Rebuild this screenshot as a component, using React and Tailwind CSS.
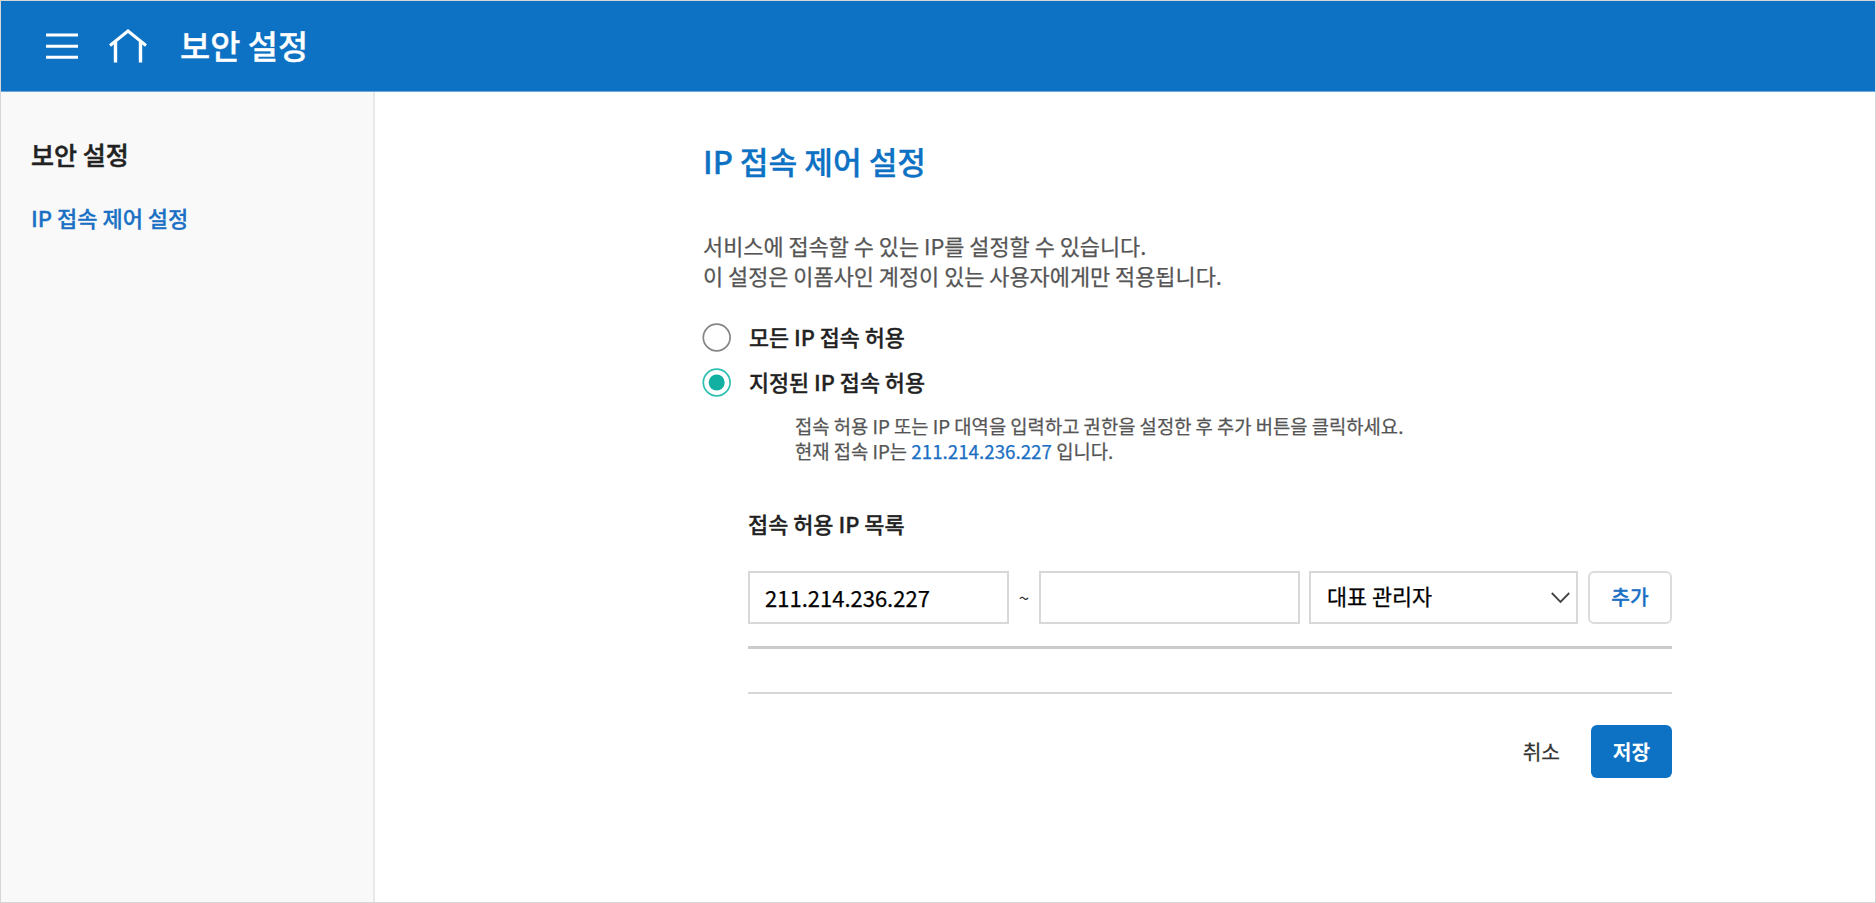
import { useState } from "react";

function MenuIcon() {
  return (
    <svg className="block h-7 w-8" viewBox="0 0 32 28" stroke="#fff" strokeWidth="3" fill="none">
      <path d="M0 3H32M0 14.2H32M0 25.2H32" />
    </svg>
  );
}

function HomeIcon() {
  return (
    <svg className="block h-[34px] w-[38px]" viewBox="0 0 38 34" stroke="#fff" strokeWidth="3" fill="none">
      <path d="M1 16.5L19 2L37 16.5" />
      <path d="M6.5 13V33.5M31.5 13V33.5" strokeWidth="3.4" />
    </svg>
  );
}

function Radio({ checked, label, onSelect }) {
  return (
    <button type="button" role="radio" aria-checked={checked} onClick={onSelect} className="-ml-px flex h-[30px] items-center text-left">
      <svg className="h-[29px] w-[29px]" viewBox="0 0 29 29">
        <circle cx="14.7" cy="14.5" r="13.4" fill="#fff" stroke={checked ? "#2fbfb0" : "#858585"} strokeWidth="1.7" />
        {checked && <circle cx="14.7" cy="14.5" r="8" fill="#12b0a2" />}
      </svg>
      <span className="ml-[18px] text-[21.8px] leading-[30px] font-medium text-[#222] [-webkit-text-stroke:0.3px]">{label}</span>
    </button>
  );
}

export default function App() {
  const [mode, setMode] = useState("some");
  return (
    <div className="flex h-[903px] w-[1876px] flex-col overflow-hidden border border-[#d6d6d6] bg-white font-['Noto_Sans_CJK_KR',sans-serif] whitespace-nowrap">
      <header className="flex h-[91px] shrink-0 items-center border-b border-[#6ea8dc] bg-[#0e72c4] pl-[45px]">
        <MenuIcon />
        <div className="ml-[31px]"><HomeIcon /></div>
        <h1 className="ml-[33px] pb-0.5 text-[32.8px] leading-[48px] font-medium text-white [-webkit-text-stroke:0.3px]">보안 설정</h1>
      </header>
      <div className="flex min-h-0 flex-1">
        <aside className="w-[374px] shrink-0 border-r-2 border-[#e8e8e8] bg-[#f9f9f9] pt-[44px] pl-[30px]">
          <h2 className="text-[25px] leading-[36px] font-medium text-[#222] [-webkit-text-stroke:0.5px]">보안 설정</h2>
          <p className="mt-[29px] text-[22px] leading-[32px] font-medium text-[#1a70c4] [-webkit-text-stroke:0.3px]">IP 접속 제어 설정</p>
        </aside>
        <main className="pt-[46px] pl-[328px]">
          <h2 className="text-[31.2px] leading-[46px] font-medium text-[#0e72c4] [-webkit-text-stroke:0.3px]">IP 접속 제어 설정</h2>
          <div className="mt-[47px] text-[21.9px] leading-[30px] text-[#555] [-webkit-text-stroke:0.25px]">
            <p>서비스에 접속할 수 있는 IP를 설정할 수 있습니다.</p>
            <p>이 설정은 이폼사인 계정이 있는 사용자에게만 적용됩니다.</p>
          </div>
          <div role="radiogroup" className="mt-[31px] flex flex-col items-start gap-[15px]">
            <Radio checked={mode === "all"} label="모든 IP 접속 허용" onSelect={() => setMode("all")} />
            <Radio checked={mode === "some"} label="지정된 IP 접속 허용" onSelect={() => setMode("some")} />
          </div>
          <section className="ml-[45px] w-[924px]">
            <div className="mt-[16px] ml-[47px] text-[18.77px] leading-[25px] text-[#555] [-webkit-text-stroke:0.25px]">
              <p>접속 허용 IP 또는 IP 대역을 입력하고 권한을 설정한 후 추가 버튼을 클릭하세요.</p>
              <p>현재 접속 IP는 <span className="text-[#1a6fc4]">211.214.236.227</span> 입니다.</p>
            </div>
            <h3 className="mt-[45px] text-[21.9px] leading-[32px] font-medium text-[#222] [-webkit-text-stroke:0.3px]">접속 허용 IP 목록</h3>
            <div className="mt-[31px] flex h-[53px]">
              <input defaultValue="211.214.236.227" className="w-[261px] border-2 border-[#d8d8d8] px-[15px] text-[22px] text-black outline-none [-webkit-text-stroke:0.25px]" />
              <span className="flex w-[30px] items-center justify-center text-[18.7px] text-[#333]">~</span>
              <input className="w-[261px] border-2 border-[#d8d8d8] px-[15px] text-[22px] text-black outline-none" />
              <button type="button" className="ml-[9px] flex w-[269px] items-center justify-between border-2 border-[#d8d8d8] pr-[6px] pb-0.5 pl-[16px] text-[21.8px] text-black [-webkit-text-stroke:0.25px]">
                대표 관리자
                <svg className="mt-0.5 h-3 w-[19px]" viewBox="0 0 19 12" fill="none" stroke="#444" strokeWidth="1.8"><path d="M.8 1L9.5 10L18.2 1" /></svg>
              </button>
              <button type="button" className="ml-[10px] w-[84px] rounded-md border-2 border-[#dcdcdc] pb-0.5 text-[20.3px] font-medium text-[#1a70c4] [-webkit-text-stroke:0.3px]">추가</button>
            </div>
            <div className="mt-[22px] h-[48px] border-t-3 border-b-2 border-t-[#cbcbcb] border-b-[#d6d6d6]" />
            <div className="mt-[31px] flex h-[53px] justify-end">
              <button type="button" className="mr-[31px] text-[20.3px] text-[#333] [-webkit-text-stroke:0.25px]">취소</button>
              <button type="button" className="w-[81px] rounded-md bg-[#0e72c4] text-[20.3px] font-bold text-white">저장</button>
            </div>
          </section>
        </main>
      </div>
    </div>
  );
}
